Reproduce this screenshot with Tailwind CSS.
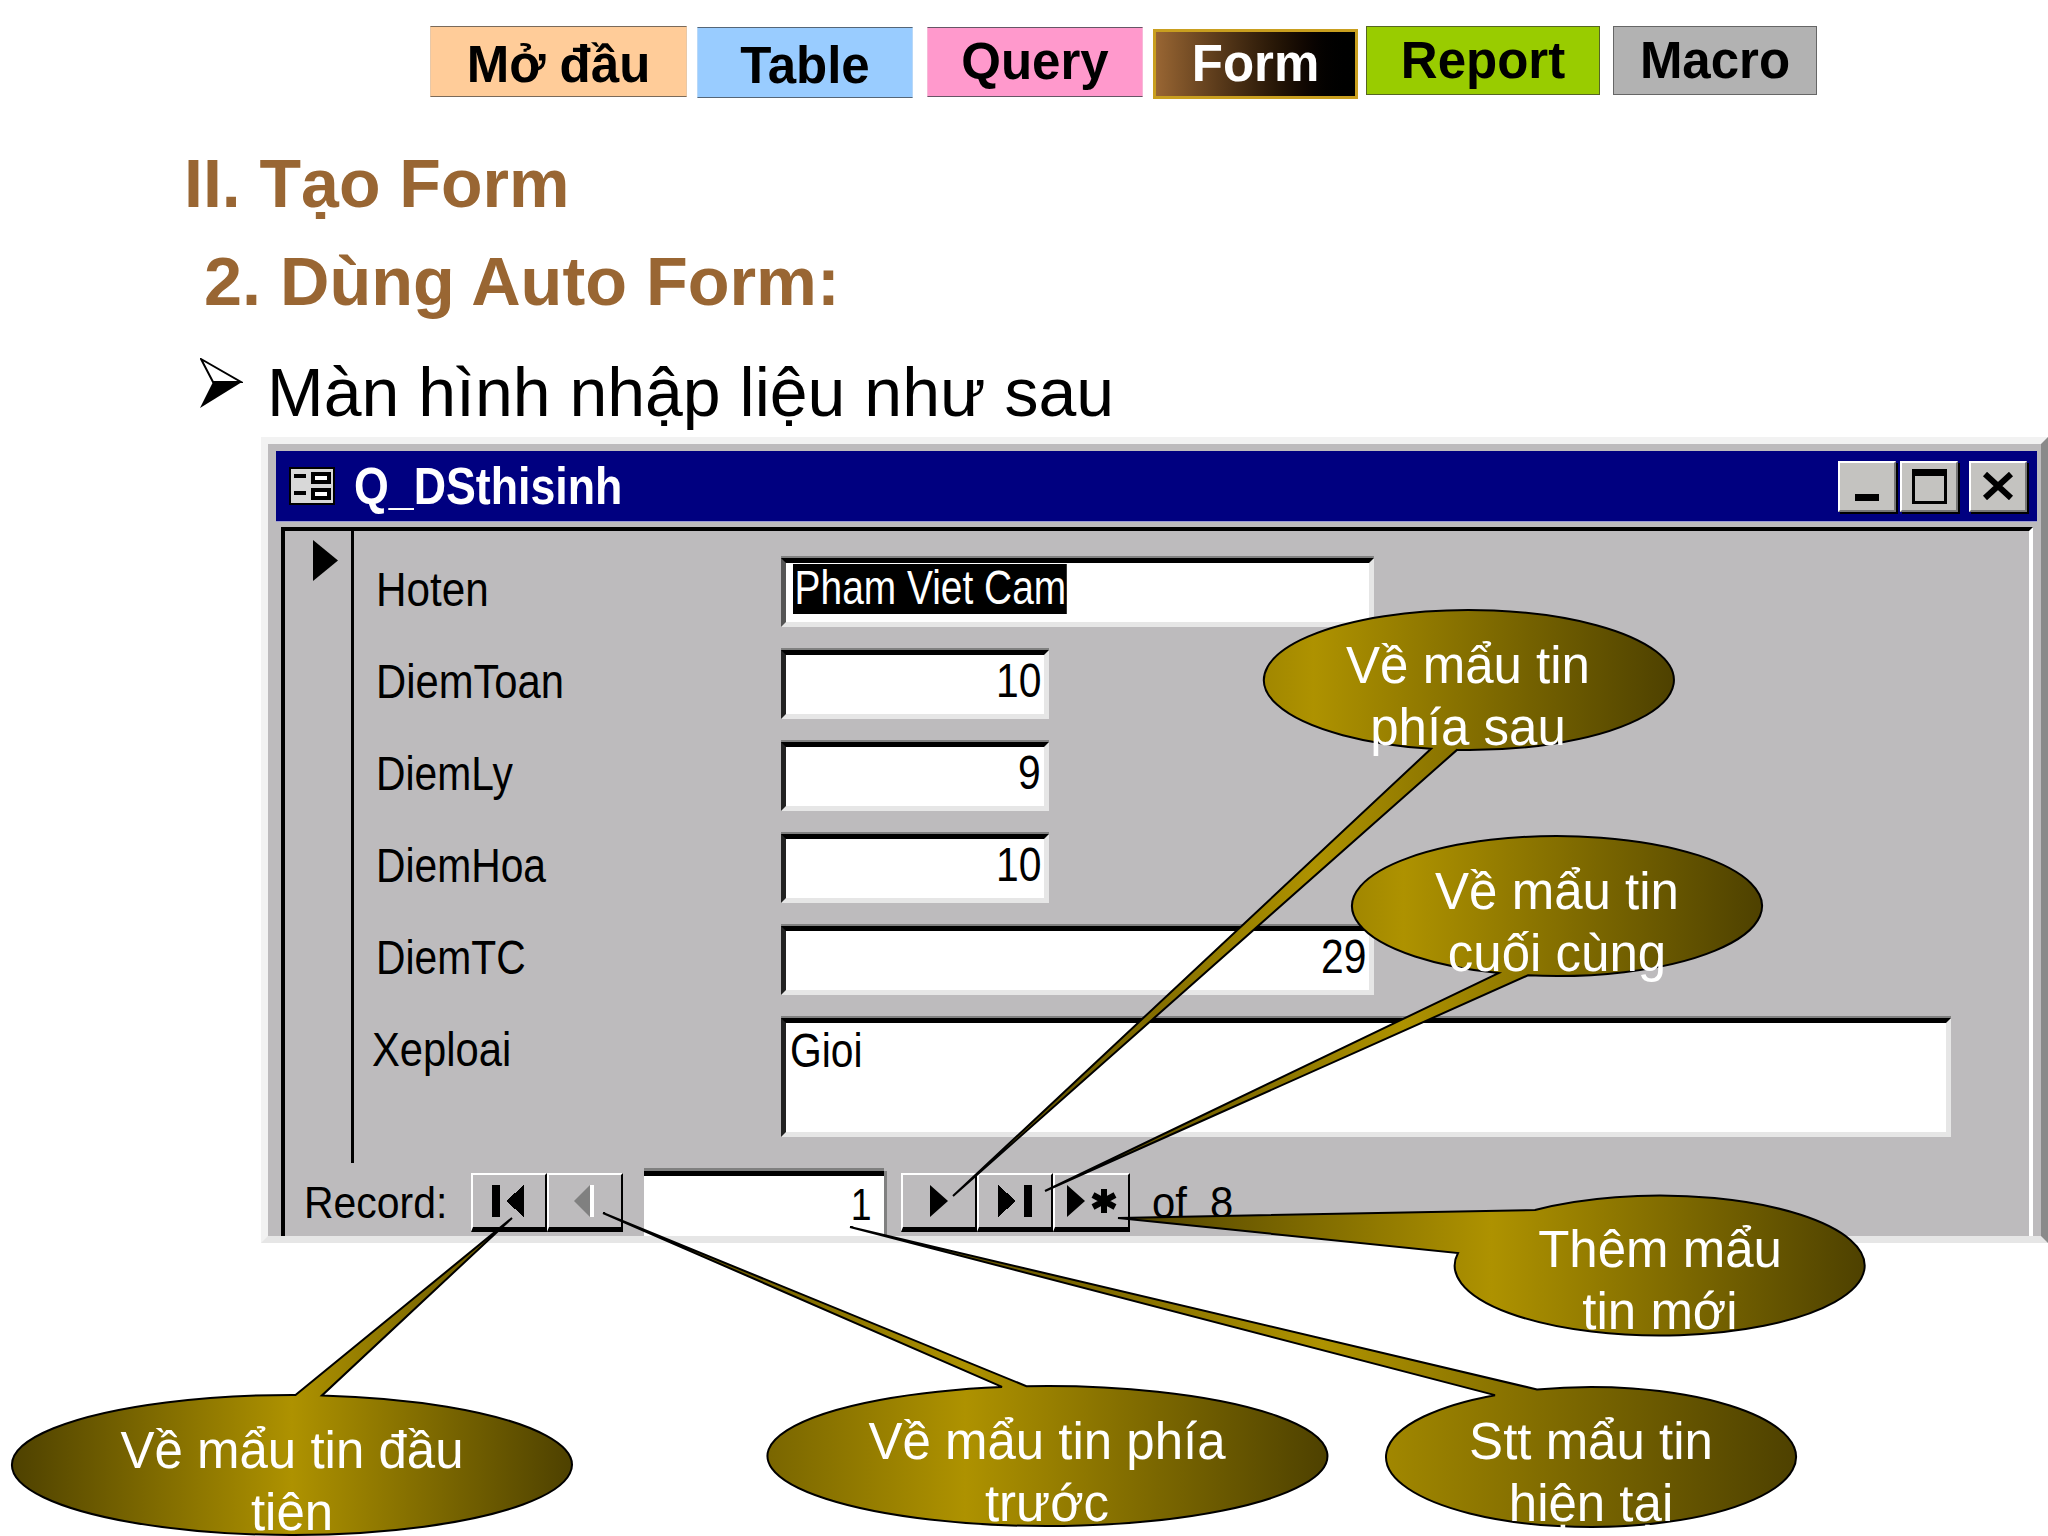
<!doctype html>
<html lang="vi">
	<head>
		<meta charset="UTF-8" />
		<title>II. Tạo Form</title>
		<script src="https://cdn.jsdelivr.net/npm/@tailwindcss/browser@4"></script>
	</head>
	<body class="relative w-[2048px] h-[1536px] overflow-hidden bg-white font-['Liberation_Sans',Arial,sans-serif] text-black">
		<!-- Top menu -->
		<nav class="flex items-start pl-[430px] pt-[26px] text-[51px] font-bold">
			<div class="w-[257px] h-[71px] flex items-center justify-center pt-[7px] bg-[#ffcc99] border border-[#7a6a5a] border-x-[#e8c8a8]">Mở đầu</div>
			<div class="w-[216px] h-[71px] ml-[10px] mt-[1px] flex items-center justify-center pt-[7px] bg-[#99ccff] border border-[#556677] border-x-[#b8d8f8]">Table</div>
			<div class="w-[216px] h-[70px] ml-[14px] mt-[1px] flex items-center justify-center bg-[#ff99cc] border border-[#665566] border-x-[#f8b8d8]">Query</div>
			<div class="w-[205px] h-[70px] ml-[10px] mt-[3px] flex items-center justify-center text-white bg-gradient-to-r from-[#996633] to-black border-[3px] border-[#c99f1f]">Form</div>
			<div class="w-[234px] h-[69px] ml-[8px] flex items-center justify-center pt-[2px] bg-[#99cc00] border border-[#556622]">Report</div>
			<div class="w-[204px] h-[69px] ml-[13px] flex items-center justify-center pt-[2px] bg-[#b2b2b2] border border-[#666]">Macro</div>
		</nav>

		<!-- Headings -->
		<h1 class="ml-[184px] mt-[50px] text-[68px] leading-[68px] font-bold text-[#996633]">II. Tạo Form</h1>
		<h2 class="ml-[204px] mt-[30px] text-[68.4px] leading-[68px] font-bold text-[#996633]">2. Dùng Auto Form:</h2>
		<div class="flex items-start ml-[200px] mt-[43px] text-[68px] leading-[68px]">
			<svg class="w-[43px] h-[50px]" viewBox="0 0 43 50">
				<path d="M1 1 L41 24 L13 24 Z" fill="#fff" stroke="#000" stroke-width="2" />
				<path d="M0 50 L42 24 L13 24 Z" fill="#000" />
			</svg>
			<span class="ml-[24px]">Màn hình nhập liệu như sau</span>
		</div>

		<!-- Access form window -->
		<section class="ml-[261px] mt-[11px] w-[1787px] h-[806px] pt-[7px] pl-[8px] pr-[4px] bg-[#bdbbbd] border-[7px] border-[#f2f2f2] border-r-[#8a8a8a] border-b-[#e6e6e6]">
			<div class="h-[71px] flex items-center bg-[#000080] border-b border-[#9a9ad0] pl-[13px]">
				<svg class="w-[46px] h-[38px]" viewBox="0 0 46 38" shape-rendering="crispEdges">
					<rect width="46" height="38" fill="#000" />
					<rect x="2" y="2" width="42" height="34" fill="#d8d8d8" />
					<rect x="5" y="7" width="12" height="4" fill="#000" />
					<rect x="5" y="24" width="12" height="4" fill="#000" />
					<rect x="22" y="5" width="20" height="12" fill="#000" />
					<rect x="26" y="9" width="12" height="4" fill="#fff" />
					<rect x="22" y="21" width="20" height="12" fill="#000" />
					<rect x="26" y="25" width="12" height="4" fill="#fff" />
				</svg>
				<span class="ml-[19px] text-[52px] font-bold text-white origin-left scale-x-[0.86]">Q_DSthisinh</span>
				<div class="ml-auto mr-[10px] flex">
					<button class="w-[58px] h-[51px] flex items-end justify-center pb-[9px] bg-[#c4c3c0] border-2 border-white border-r-[#777] border-b-[#777] shadow-[2px_2px_0_#000]">
						<span class="w-[24px] h-[7px] bg-black"></span>
					</button>
					<button class="w-[58px] h-[51px] ml-[4px] flex items-center justify-center bg-[#c4c3c0] border-2 border-white border-r-[#777] border-b-[#777] shadow-[2px_2px_0_#000]">
						<span class="w-[35px] h-[35px] bg-transparent border-[3px] border-t-[7px] border-black"></span>
					</button>
					<button class="w-[58px] h-[51px] ml-[11px] flex items-center justify-center bg-[#c4c3c0] border-2 border-white border-r-[#777] border-b-[#777] shadow-[2px_2px_0_#000]">
						<svg class="w-[32px] h-[28px]" viewBox="0 0 32 28"><path d="M3 2 L29 26 M29 2 L3 26" stroke="#000" stroke-width="6" fill="none" /></svg>
					</button>
				</div>
			</div>

			<div class="h-[709px] mt-[5px] ml-[5px] mr-[4px] flex flex-col border-t-4 border-t-black border-l-4 border-l-black border-r-4 border-r-white">
				<div class="h-[632px] flex">
					<div class="w-[69px] shrink-0 border-r-[3px] border-black pl-[28px] pt-[9px]">
						<svg class="w-[25px] h-[41px]" viewBox="0 0 25 41"><path d="M0 0 L25 20.5 L0 41 Z" /></svg>
					</div>

					<div class="flex-1 pl-[22px] pt-[27px] text-[48px] leading-[63px]">
						<div class="flex h-[69px]">
							<div class="w-[405px]"><span class="inline-block origin-left scale-x-[0.88]">Hoten</span></div>
							<div class="w-[593px] h-[69px] flex items-start pt-[1px] pl-[7px] bg-white border-[5px] border-t-black border-l-[#555] border-r-[#e6e6e6] border-b-[#e6e6e6] shadow-[0_-2px_0_#808080]">
								<span class="h-[50px] leading-[48px] pl-[2px] pr-[1px] bg-black text-white origin-left scale-x-[0.81]">Pham Viet Cam</span>
							</div>
						</div>
						<div class="flex h-[69px] mt-[23px]">
							<div class="w-[405px]"><span class="inline-block origin-left scale-x-[0.87]">DiemToan</span></div>
							<div class="w-[268px] h-[69px] pr-[3px] text-right bg-white border-[5px] border-t-black border-l-[#222] border-r-[#e6e6e6] border-b-[#e6e6e6] shadow-[0_-2px_0_#808080] leading-[52px]"><span class="inline-block origin-right scale-x-[0.85]">10</span></div>
						</div>
						<div class="flex h-[69px] mt-[23px]">
							<div class="w-[405px]"><span class="inline-block origin-left scale-x-[0.85]">DiemLy</span></div>
							<div class="w-[268px] h-[69px] pr-[3px] text-right bg-white border-[5px] border-t-black border-l-[#222] border-r-[#e6e6e6] border-b-[#e6e6e6] shadow-[0_-2px_0_#808080] leading-[52px]"><span class="inline-block origin-right scale-x-[0.85]">9</span></div>
						</div>
						<div class="flex h-[69px] mt-[23px]">
							<div class="w-[405px]"><span class="inline-block origin-left scale-x-[0.85]">DiemHoa</span></div>
							<div class="w-[268px] h-[69px] pr-[3px] text-right bg-white border-[5px] border-t-black border-l-[#222] border-r-[#e6e6e6] border-b-[#e6e6e6] shadow-[0_-2px_0_#808080] leading-[52px]"><span class="inline-block origin-right scale-x-[0.85]">10</span></div>
						</div>
						<div class="flex h-[69px] mt-[23px]">
							<div class="w-[405px]"><span class="inline-block origin-left scale-x-[0.85]">DiemTC</span></div>
							<div class="w-[593px] h-[69px] pr-[3px] text-right bg-white border-[5px] border-t-black border-l-[#222] border-r-[#e6e6e6] border-b-[#e6e6e6] shadow-[0_-2px_0_#808080] leading-[52px]"><span class="inline-block origin-right scale-x-[0.85]">29</span></div>
						</div>
						<div class="flex h-[119px] mt-[23px]">
							<div class="w-[401px] -ml-[4px]"><span class="inline-block origin-left scale-x-[0.87]">Xeploai</span></div>
							<div class="w-[1170px] h-[119px] ml-[8px] pl-[4px] bg-white border-[5px] border-t-black border-l-[#222] border-r-[#e6e6e6] border-b-[#e6e6e6] shadow-[0_-2px_0_#808080] leading-[56px]"><span class="inline-block origin-left scale-x-[0.85]">Gioi</span></div>
						</div>
					</div>
				</div>

				<!-- Record navigation -->
				<div class="flex flex-1 pl-[19px] pt-[10px] text-[44px] leading-[59px]">
					<div class="w-[167px]"><span class="inline-block origin-left scale-x-[0.93]">Record:</span></div>
					<button class="w-[76px] h-[59px] flex items-center justify-center bg-[#bdbbbd] border-2 border-white border-r-black border-b-[5px] border-b-black">
						<svg class="w-[34px] h-[32px]" viewBox="0 0 34 32" shape-rendering="crispEdges"><path d="M0 0 H8 V32 H0 Z M14 16 L32 0 V32 Z" /></svg>
					</button>
					<button class="w-[76px] h-[59px] flex items-center justify-center bg-[#bdbbbd] border-2 border-white border-r-black border-b-[5px] border-b-black">
						<svg class="w-[22px] h-[32px]" viewBox="0 0 22 32"><path d="M0 16 L16 0 V32 Z" fill="#808080" /><rect x="16" y="0" width="4" height="32" fill="#fff" /></svg>
					</button>
					<div class="w-[240px] h-[65px] -mt-[2px] ml-[21px] pr-[13px] text-right bg-white border-t-[5px] border-black shadow-[0_-3px_0_#808080,3px_0_0_#808080] leading-[58px]"><span class="inline-block origin-right scale-x-[0.85]">1</span></div>
					<button class="w-[76px] h-[59px] ml-[17px] flex items-center justify-center bg-[#bdbbbd] border-2 border-white border-r-black border-b-[5px] border-b-black">
						<svg class="w-[18px] h-[32px]" viewBox="0 0 18 32"><path d="M0 0 L18 16 L0 32 Z" /></svg>
					</button>
					<button class="w-[76px] h-[59px] flex items-center justify-center bg-[#bdbbbd] border-2 border-white border-r-black border-b-[5px] border-b-black">
						<svg class="w-[34px] h-[32px]" viewBox="0 0 34 32" shape-rendering="crispEdges"><path d="M0 0 L18 16 L0 32 Z M26 0 H34 V32 H26 Z" /></svg>
					</button>
					<button class="w-[77px] h-[59px] flex items-center justify-center bg-[#bdbbbd] border-2 border-white border-r-black border-b-[5px] border-b-black">
						<svg class="w-[50px] h-[32px]" viewBox="0 0 50 32"><path d="M0 0 L18 16 L0 32 Z" /><path d="M37 4 V28 M26 10 L48 22 M48 10 L26 22" stroke="#000" stroke-width="6" fill="none" /></svg>
					</button>
					<div class="ml-[22px]"><span class="inline-block origin-left scale-x-[0.95]">of&nbsp;&nbsp;8</span></div>
				</div>
			</div>
		</section>

		<!-- Callouts lie over the window -->
		<svg class="absolute top-0 left-0 w-[2048px] h-[1536px] text-[51px]" viewBox="0 0 2048 1536">
			<defs>
				<linearGradient id="gold">
					<stop offset="0" stop-color="#4e4100" />
					<stop offset="0.5" stop-color="#ae9200" />
					<stop offset="1" stop-color="#4e4100" />
				</linearGradient>
			</defs>
			<g fill="url(#gold)" stroke="#000" stroke-width="2">
				<path d="M1431 748.79 A205 70 0 1 1 1457 749.88 L953 1196 Z" />
				<path d="M1498.5 973.09 A205 70 0 1 1 1528 975.3 L1045 1191 Z" />
				<path d="M1535 1210 A205 70 0 1 1 1458 1253 L1118 1218 Z" />
				<path d="M322 1395.4 A280 70 0 1 1 295.5 1395 L512 1218 Z" />
				<path d="M1026.4 1386.2 A280 70 0 1 1 1002 1386.93 L603 1213 Z" />
				<path d="M1537 1389.47 A205 70 0 1 1 1495 1395.15 L850 1227 Z" />
			</g>
			<g fill="#fff" text-anchor="middle">
				<text x="1468" y="683">Về mẩu tin</text>
				<text x="1468" y="745">phía sau</text>
				<text x="1557" y="909">Về mẩu tin</text>
				<text x="1557" y="971">cuối cùng</text>
				<text x="1660" y="1267">Thêm mẩu</text>
				<text x="1660" y="1329">tin mới</text>
				<text x="292" y="1468">Về mẩu tin đầu</text>
				<text x="292" y="1530">tiên</text>
				<text x="1047" y="1459">Về mẩu tin phía</text>
				<text x="1047" y="1521">trước</text>
				<text x="1591" y="1459">Stt mẩu tin</text>
				<text x="1591" y="1521">hiện tại</text>
			</g>
		</svg>
	</body>
</html>
